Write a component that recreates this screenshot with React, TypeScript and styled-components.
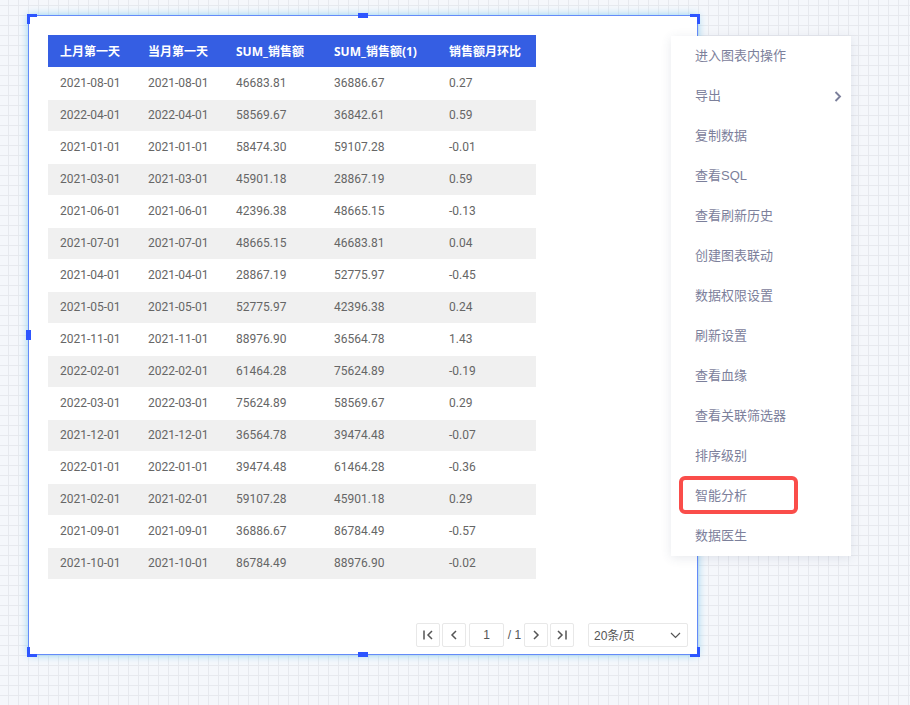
import React, { useState } from 'react';
import styled, { createGlobalStyle, css } from 'styled-components';

const sans = '"Liberation Sans", "Noto Sans CJK SC", sans-serif';

const GlobalStyle = createGlobalStyle`
  *, *::before, *::after { box-sizing: border-box; }
  body { margin: 0; font-family: ${sans}; }
  button, input, select { font: inherit; color: inherit; }
`;

const Canvas = styled.main`
  display: flex;
  min-height: 100vh;
  padding: 15px 212px 50px 28px;
  background-color: #f5f7fb;
  background-image:
    linear-gradient(to right, #e7e9ee 1px, transparent 1px),
    linear-gradient(to bottom, #e7e9ee 1px, transparent 1px);
  background-size: 10px 10px;
  background-position: 8px 0, 0 5px;
`;

const ChartCard = styled.section`
  position: relative;
  flex: 1;
  display: flex;
  flex-direction: column;
  align-items: flex-start;
  padding: 19px 9px 7px 19px;
  background: #fff;
  border: 1px solid #648bf9;
  box-shadow: 0 0 8px #8fd0f0;
`;

type Place = 'topLeft' | 'topRight' | 'bottomLeft' | 'bottomRight' | 'top' | 'bottom' | 'left';

const places = {
  topLeft: css`top: -2px; left: -2px; border-width: 3px 0 0 3px;`,
  topRight: css`top: -2px; right: -3px; border-width: 3px 3px 0 0;`,
  bottomLeft: css`bottom: -3px; left: -2px; border-width: 0 0 3px 3px;`,
  bottomRight: css`bottom: -3px; right: -3px; border-width: 0 3px 3px 0;`,
  top: css`top: -3px; left: calc(50% - 5px); height: 5px; background: #2d55ff;`,
  bottom: css`bottom: -3px; left: calc(50% - 5px); height: 5px; background: #2d55ff;`,
  left: css`left: -3px; top: calc(50% - 5px); width: 5px; background: #2d55ff;`,
};

const Handle = styled.span<{ $place: Place }>`
  position: absolute;
  width: 10px;
  height: 10px;
  border: 0 solid #2d55ff;
  ${({ $place }) => places[$place]}
`;

const DataTable = styled.table`
  table-layout: fixed;
  width: 488px;
  max-width: 100%;
  border-collapse: collapse;
  font-size: 12px;
  line-height: 16px;
`;

const Column = styled.col<{ $width: number }>`
  width: ${({ $width }) => $width}px;
`;

const HeadCell = styled.th`
  height: 32px;
  padding: 2px 0 0 12px;
  background: #355ee3;
  color: #fff;
  font-family: "Noto Sans", "Noto Sans CJK SC", sans-serif;
  font-weight: 700;
  text-align: left;
  white-space: nowrap;
`;

const Row = styled.tr`
  &:nth-child(even) {
    background: linear-gradient(#fff 1px, #f0f0f0 1px);
  }
`;

const Cell = styled.td`
  height: 32px;
  padding: 0 0 0 12px;
  color: #666;
  font-family: Roboto, sans-serif;
  white-space: nowrap;
`;

const Pager = styled.nav`
  display: flex;
  align-items: center;
  align-self: flex-end;
  margin-top: auto;
  color: #555;
  font-size: 12px;
`;

const PageButton = styled.button`
  display: grid;
  place-items: center;
  width: 24px;
  height: 24px;
  margin-right: 2px;
  padding: 0;
  background: #fff;
  border: 1px solid #e8e8e8;
  border-radius: 2px;
  cursor: pointer;
`;

const PageInput = styled.input`
  width: 35px;
  height: 24px;
  margin-left: 1px;
  padding: 0;
  background: #fff;
  border: 1px solid #e8e8e8;
  border-radius: 2px;
  text-align: center;
`;

const PageTotal = styled.span`
  width: 20px;
  padding-left: 1px;
  text-align: center;
  white-space: nowrap;
`;

const SizePicker = styled.label`
  display: grid;
  align-items: center;
  width: 100px;
  margin-left: 12px;

  > * { grid-area: 1 / 1; }
  > svg { justify-self: end; margin-right: 7px; pointer-events: none; }
`;

const SizeSelect = styled.select`
  appearance: none;
  width: 100%;
  height: 24px;
  padding: 2px 24px 0 5px;
  background: #fff;
  border: 1px solid #e8e8e8;
  border-radius: 2px;
`;

const Menu = styled.ul`
  position: absolute;
  top: 20px;
  left: calc(100% - 26px);
  width: 180px;
  margin: 0;
  padding: 0;
  list-style: none;
  background: #fff;
  box-shadow: 0 2px 10px rgba(60, 70, 110, 0.12);
`;

const MenuItem = styled.li<{ $marked: boolean }>`
  position: relative;

  ${({ $marked }) => $marked && css`
    &::after {
      content: '';
      position: absolute;
      inset: 0 53px 2px 8px;
      border: 4px solid #fa4d4a;
      border-radius: 6px;
      pointer-events: none;
    }
  `}
`;

const MenuButton = styled.button`
  display: flex;
  align-items: center;
  justify-content: space-between;
  width: 100%;
  height: 40px;
  padding: 0 9px 0 24px;
  background: none;
  border: 0;
  color: #7c809b;
  font-size: 13px;
  line-height: 20px;
  text-align: left;
  cursor: pointer;
`;

const columns = [
  { title: '上月第一天', width: 88 },
  { title: '当月第一天', width: 88 },
  { title: 'SUM_销售额', width: 98 },
  { title: 'SUM_销售额(1)', width: 115 },
  { title: '销售额月环比', width: 99 },
];

const rows = [
  ['2021-08-01', '46683.81', '36886.67', '0.27'],
  ['2022-04-01', '58569.67', '36842.61', '0.59'],
  ['2021-01-01', '58474.30', '59107.28', '-0.01'],
  ['2021-03-01', '45901.18', '28867.19', '0.59'],
  ['2021-06-01', '42396.38', '48665.15', '-0.13'],
  ['2021-07-01', '48665.15', '46683.81', '0.04'],
  ['2021-04-01', '28867.19', '52775.97', '-0.45'],
  ['2021-05-01', '52775.97', '42396.38', '0.24'],
  ['2021-11-01', '88976.90', '36564.78', '1.43'],
  ['2022-02-01', '61464.28', '75624.89', '-0.19'],
  ['2022-03-01', '75624.89', '58569.67', '0.29'],
  ['2021-12-01', '36564.78', '39474.48', '-0.07'],
  ['2022-01-01', '39474.48', '61464.28', '-0.36'],
  ['2021-02-01', '59107.28', '45901.18', '0.29'],
  ['2021-09-01', '36886.67', '86784.49', '-0.57'],
  ['2021-10-01', '86784.49', '88976.90', '-0.02'],
];

const menuItems = [
  '进入图表内操作', '导出', '复制数据', '查看SQL', '查看刷新历史', '创建图表联动', '数据权限设置',
  '刷新设置', '查看血缘', '查看关联筛选器', '排序级别', '智能分析', '数据医生',
];

const handles: Place[] = ['topLeft', 'topRight', 'bottomLeft', 'bottomRight', 'top', 'bottom', 'left'];

function Glyph({ d, width = 12, height = 12, stroke = 1.5 }: { d: string; width?: number; height?: number; stroke?: number }) {
  return (
    <svg width={width} height={height} viewBox={`0 0 ${width} ${height}`} fill="none" stroke="currentColor" strokeWidth={stroke} aria-hidden="true">
      <path d={d} />
    </svg>
  );
}

export default function App() {
  const [page, setPage] = useState('1');

  return (
    <>
      <GlobalStyle />
      <Canvas>
        <ChartCard>
          <DataTable>
            <colgroup>
              {columns.map((c) => <Column key={c.title} $width={c.width} />)}
            </colgroup>
            <thead>
              <tr>{columns.map((c) => <HeadCell key={c.title} scope="col">{c.title}</HeadCell>)}</tr>
            </thead>
            <tbody>
              {rows.map(([date, ...values]) => (
                <Row key={date}>
                  <Cell>{date}</Cell>
                  <Cell>{date}</Cell>
                  {values.map((v, i) => <Cell key={i}>{v}</Cell>)}
                </Row>
              ))}
            </tbody>
          </DataTable>

          <Pager aria-label="分页">
            <PageButton type="button" aria-label="首页"><Glyph d="M2 1.5V10.5M10 2L6 6L10 10" /></PageButton>
            <PageButton type="button" aria-label="上一页"><Glyph d="M8 2L4 6L8 10" /></PageButton>
            <PageInput aria-label="页码" value={page} onChange={(e) => setPage(e.target.value)} />
            <PageTotal>/ 1</PageTotal>
            <PageButton type="button" aria-label="下一页"><Glyph d="M4 2L8 6L4 10" /></PageButton>
            <PageButton type="button" aria-label="末页"><Glyph d="M2 2L6 6L2 10M10 1.5V10.5" /></PageButton>
            <SizePicker>
              <SizeSelect aria-label="每页条数" defaultValue="20">
                <option value="20">20条/页</option>
                <option value="50">50条/页</option>
                <option value="100">100条/页</option>
              </SizeSelect>
              <Glyph d="M1 1L5.5 5.5L10 1" width={11} height={7} stroke={1.2} />
            </SizePicker>
          </Pager>

          {handles.map((place) => <Handle key={place} $place={place} />)}

          <Menu>
            {menuItems.map((item) => (
              <MenuItem key={item} $marked={item === '智能分析'}>
                <MenuButton type="button">
                  {item}
                  {item === '导出' && <Glyph d="M1.5 1L6 5.5L1.5 10" width={8} height={11} stroke={1.9} />}
                </MenuButton>
              </MenuItem>
            ))}
          </Menu>
        </ChartCard>
      </Canvas>
    </>
  );
}
